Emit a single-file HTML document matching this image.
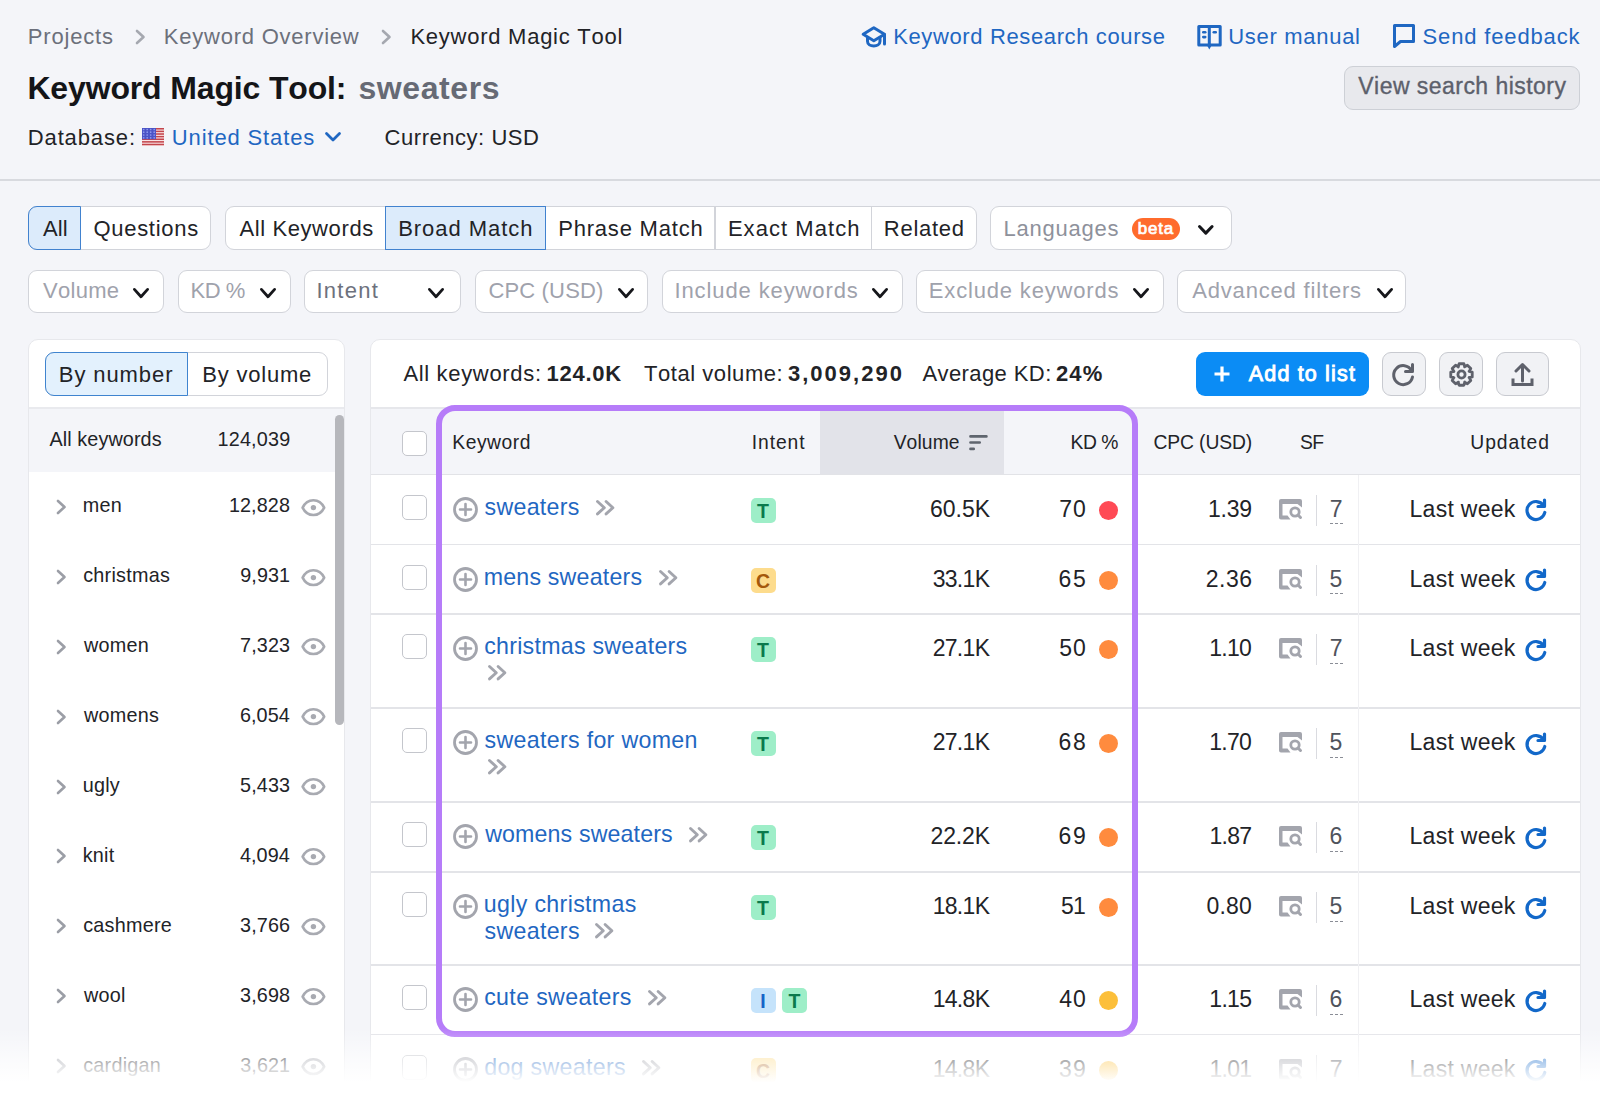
<!DOCTYPE html><html><head><meta charset="utf-8"><style>
html,body{margin:0;padding:0;}
body{width:1600px;height:1096px;overflow:hidden;position:relative;background:#f4f5f9;font-family:"Liberation Sans",sans-serif;font-kerning:none;}
.t{position:absolute;white-space:nowrap;}
.b{position:absolute;box-sizing:border-box;}
svg.b{overflow:visible;}
</style></head><body>
<div class="t" style="left:27.80px;top:26.10px;font-size:22px;line-height:22px;color:#6c707b;font-weight:400;letter-spacing:0.814px;">Projects</div>
<svg class="b" style="left:135px;top:29px;" width="11" height="16" viewBox="0 0 11 16"><polyline points="2,2 8.5,8 2,14" fill="none" stroke="#a5a8b0" stroke-width="2.6" stroke-linecap="round" stroke-linejoin="round"/></svg>
<div class="t" style="left:163.80px;top:26.10px;font-size:22px;line-height:22px;color:#6c707b;font-weight:400;letter-spacing:0.770px;">Keyword Overview</div>
<svg class="b" style="left:381px;top:29px;" width="11" height="16" viewBox="0 0 11 16"><polyline points="2,2 8.5,8 2,14" fill="none" stroke="#a5a8b0" stroke-width="2.6" stroke-linecap="round" stroke-linejoin="round"/></svg>
<div class="t" style="left:410.40px;top:26.10px;font-size:22px;line-height:22px;color:#222327;font-weight:400;letter-spacing:0.747px;">Keyword Magic Tool</div>
<div class="t" style="left:27.40px;top:72.00px;font-size:32px;line-height:32px;color:#141518;font-weight:700;letter-spacing:-0.150px;">Keyword Magic Tool:</div>
<div class="t" style="left:358.40px;top:72.00px;font-size:32px;line-height:32px;color:#666a75;font-weight:700;letter-spacing:0.586px;">sweaters</div>
<div class="t" style="left:27.80px;top:127.00px;font-size:22px;line-height:22px;color:#222327;font-weight:400;letter-spacing:0.863px;">Database:</div>
<svg class="b" style="left:142px;top:128px;" width="22" height="18" viewBox="0 0 22 18"><rect x="0" y="0" width="22" height="18" fill="#fbe9ea"/><rect x="0" y="0.00" width="22" height="1.55" fill="#c3464d"/><rect x="0" y="2.62" width="22" height="1.55" fill="#c3464d"/><rect x="0" y="5.24" width="22" height="1.55" fill="#c3464d"/><rect x="0" y="7.86" width="22" height="1.55" fill="#c3464d"/><rect x="0" y="10.48" width="22" height="1.55" fill="#c3464d"/><rect x="0" y="13.10" width="22" height="1.55" fill="#c3464d"/><rect x="0" y="15.72" width="22" height="1.55" fill="#c3464d"/><rect x="0" y="0" width="14" height="11.2" fill="#4b53c6"/><circle cx="1.7" cy="1.5" r="0.85" fill="#8f99ee"/><circle cx="5.2" cy="1.5" r="0.85" fill="#8f99ee"/><circle cx="8.7" cy="1.5" r="0.85" fill="#8f99ee"/><circle cx="12.2" cy="1.5" r="0.85" fill="#8f99ee"/><circle cx="1.7" cy="4.2" r="0.85" fill="#8f99ee"/><circle cx="5.2" cy="4.2" r="0.85" fill="#8f99ee"/><circle cx="8.7" cy="4.2" r="0.85" fill="#8f99ee"/><circle cx="12.2" cy="4.2" r="0.85" fill="#8f99ee"/><circle cx="1.7" cy="7.0" r="0.85" fill="#8f99ee"/><circle cx="5.2" cy="7.0" r="0.85" fill="#8f99ee"/><circle cx="8.7" cy="7.0" r="0.85" fill="#8f99ee"/><circle cx="12.2" cy="7.0" r="0.85" fill="#8f99ee"/><circle cx="1.7" cy="9.8" r="0.85" fill="#8f99ee"/><circle cx="5.2" cy="9.8" r="0.85" fill="#8f99ee"/><circle cx="8.7" cy="9.8" r="0.85" fill="#8f99ee"/><circle cx="12.2" cy="9.8" r="0.85" fill="#8f99ee"/></svg>
<div class="t" style="left:171.80px;top:127.00px;font-size:22px;line-height:22px;color:#1f67c2;font-weight:400;letter-spacing:0.867px;">United States</div>
<svg class="b" style="left:324px;top:131px;" width="18" height="12" viewBox="0 0 18 12"><polyline points="2.5,2.5 9,9 15.5,2.5" fill="none" stroke="#1f67c2" stroke-width="2.8" stroke-linecap="round" stroke-linejoin="round"/></svg>
<div class="t" style="left:384.60px;top:127.00px;font-size:22px;line-height:22px;color:#222327;font-weight:400;letter-spacing:0.533px;">Currency: USD</div>
<svg class="b" style="left:861px;top:24px;" width="26" height="26" viewBox="0 0 26 26"><g fill="none" stroke="#1f67c2" stroke-width="3" stroke-linejoin="round" stroke-linecap="round"><path d="M12.8,3.7 L23.5,10.3 L12.8,16.8 L2.2,10.3 Z"/><path d="M6.5,13.8 V17.3 C6.5,20.3 9.5,22 12.8,22 C16,22 19,20.3 19,17.3 V13.8"/><path d="M23.5,10.5 V20"/></g></svg>
<div class="t" style="left:893.20px;top:26.10px;font-size:22px;line-height:22px;color:#1f67c2;font-weight:400;letter-spacing:0.627px;">Keyword Research course</div>
<svg class="b" style="left:1197px;top:23.5px;" width="25" height="27" viewBox="0 0 25 27"><g fill="none" stroke="#1f67c2" stroke-width="3" stroke-linejoin="round"><path d="M1.8,2.6 H12.3 V20.9 H1.8 Z"/><path d="M12.3,2.6 H23.2 V20.9 H12.3"/></g><path d="M9.3,20 L12.3,25.6 L15.3,20 Z" fill="#1f67c2"/><rect x="5" y="7" width="4.5" height="2.6" rx="1.3" fill="#1f67c2"/><rect x="5" y="11.8" width="4.5" height="2.6" rx="1.3" fill="#1f67c2"/><rect x="15.5" y="7" width="4.5" height="2.6" rx="1.3" fill="#1f67c2"/></svg>
<div class="t" style="left:1228.20px;top:26.10px;font-size:22px;line-height:22px;color:#1f67c2;font-weight:400;letter-spacing:0.710px;">User manual</div>
<svg class="b" style="left:1393px;top:23.5px;" width="24" height="26" viewBox="0 0 24 26"><path d="M1.5,22.5 V1.5 H20.5 V17.5 H7.5 Z" fill="none" stroke="#1f67c2" stroke-width="3" stroke-linejoin="round"/></svg>
<div class="t" style="left:1422.60px;top:26.10px;font-size:22px;line-height:22px;color:#1f67c2;font-weight:400;letter-spacing:0.842px;">Send feedback</div>
<div class="b" style="left:1344px;top:66px;width:236.00px;height:43.50px;background:#e8e9ed;border:1.2px solid #cdd0d6;border-radius:9px;"></div>
<div class="t" style="left:1358.30px;top:75.15px;font-size:23px;line-height:23px;color:#5c606b;font-weight:400;letter-spacing:0.456px;-webkit-text-stroke:0.35px currentColor;">View search history</div>
<div class="b" style="left:0px;top:179px;width:1600.00px;height:2.00px;background:#d8dadf;"></div>
<div class="b" style="left:28px;top:206px;width:183.00px;height:44.00px;background:#fff;border:1.2px solid #d2d4da;border-radius:9px;"></div>
<div class="b" style="left:28px;top:206px;width:52.60px;height:44.00px;background:#dcebfb;border:1.5px solid #4182cf;border-radius:9px 0 0 9px;"></div>
<div class="t" style="left:43.00px;top:217.90px;font-size:22px;line-height:22px;color:#222327;font-weight:400;letter-spacing:0.125px;">All</div>
<div class="t" style="left:93.40px;top:217.90px;font-size:22px;line-height:22px;color:#222327;font-weight:400;letter-spacing:0.725px;">Questions</div>
<div class="b" style="left:225px;top:206px;width:752.00px;height:44.00px;background:#fff;border:1.2px solid #d2d4da;border-radius:9px;"></div>
<div class="t" style="left:239.40px;top:217.90px;font-size:22px;line-height:22px;color:#222327;font-weight:400;letter-spacing:0.609px;">All Keywords</div>
<div class="b" style="left:385px;top:206px;width:161.00px;height:44.00px;background:#dcebfb;border:1.5px solid #4182cf;border-radius:0 0 0 0;"></div>
<div class="t" style="left:398.20px;top:217.90px;font-size:22px;line-height:22px;color:#222327;font-weight:400;letter-spacing:0.950px;">Broad Match</div>
<div class="t" style="left:558.20px;top:217.90px;font-size:22px;line-height:22px;color:#222327;font-weight:400;letter-spacing:0.795px;">Phrase Match</div>
<div class="b" style="left:714.4px;top:207px;width:1.20px;height:42.00px;background:#d2d4da;"></div>
<div class="t" style="left:727.90px;top:217.90px;font-size:22px;line-height:22px;color:#222327;font-weight:400;letter-spacing:1.050px;">Exact Match</div>
<div class="b" style="left:870.8px;top:207px;width:1.20px;height:42.00px;background:#d2d4da;"></div>
<div class="t" style="left:883.80px;top:217.90px;font-size:22px;line-height:22px;color:#222327;font-weight:400;letter-spacing:0.733px;">Related</div>
<div class="b" style="left:990px;top:206px;width:241.50px;height:44.00px;background:#fff;border:1.2px solid #d2d4da;border-radius:9px;"></div>
<div class="t" style="left:1003.60px;top:217.90px;font-size:22px;line-height:22px;color:#8e919b;font-weight:400;letter-spacing:0.762px;">Languages</div>
<div class="b" style="left:1132px;top:217.8px;width:48.00px;height:21.90px;background:#ff6b2c;border-radius:11px;"></div>
<div class="t" style="left:1137.70px;top:219.75px;font-size:17px;line-height:17px;color:#fff;font-weight:400;letter-spacing:0.800px;-webkit-text-stroke:0.7px #fff;">beta</div>
<svg class="b" style="left:1197.7px;top:224.8px;" width="15.6" height="9.6" viewBox="0 0 15.6 9.6"><polyline points="1.5,1.5 7.8,8.1 14.1,1.5" fill="none" stroke="#16171b" stroke-width="3" stroke-linecap="round" stroke-linejoin="round"/></svg>
<div class="b" style="left:28px;top:270px;width:135.70px;height:43.00px;background:#fff;border:1.2px solid #d2d4da;border-radius:9px;"></div>
<div class="t" style="left:43.00px;top:280.30px;font-size:22px;line-height:22px;color:#9fa2ac;font-weight:400;letter-spacing:0.280px;">Volume</div>
<svg class="b" style="left:132.89999999999998px;top:287.90000000000003px;" width="16.0" height="10.2" viewBox="0 0 16.0 10.2"><polyline points="1.4,1.4 8.0,8.8 14.6,1.4" fill="none" stroke="#16171b" stroke-width="2.8" stroke-linecap="round" stroke-linejoin="round"/></svg>
<div class="b" style="left:177.5px;top:270px;width:113.30px;height:43.00px;background:#fff;border:1.2px solid #d2d4da;border-radius:9px;"></div>
<div class="t" style="left:190.40px;top:280.30px;font-size:22px;line-height:22px;color:#9fa2ac;font-weight:400;letter-spacing:-0.400px;">KD %</div>
<svg class="b" style="left:260.05px;top:287.90000000000003px;" width="16.0" height="10.2" viewBox="0 0 16.0 10.2"><polyline points="1.4,1.4 8.0,8.8 14.6,1.4" fill="none" stroke="#16171b" stroke-width="2.8" stroke-linecap="round" stroke-linejoin="round"/></svg>
<div class="b" style="left:304.4px;top:270px;width:157.00px;height:43.00px;background:#fff;border:1.2px solid #d2d4da;border-radius:9px;"></div>
<div class="t" style="left:316.40px;top:280.30px;font-size:22px;line-height:22px;color:#6d717d;font-weight:400;letter-spacing:1.300px;">Intent</div>
<svg class="b" style="left:427.7px;top:287.90000000000003px;" width="16.0" height="10.2" viewBox="0 0 16.0 10.2"><polyline points="1.4,1.4 8.0,8.8 14.6,1.4" fill="none" stroke="#16171b" stroke-width="2.8" stroke-linecap="round" stroke-linejoin="round"/></svg>
<div class="b" style="left:475.3px;top:270px;width:173.20px;height:43.00px;background:#fff;border:1.2px solid #d2d4da;border-radius:9px;"></div>
<div class="t" style="left:488.40px;top:280.30px;font-size:22px;line-height:22px;color:#9fa2ac;font-weight:400;letter-spacing:0.162px;">CPC (USD)</div>
<svg class="b" style="left:617.5000000000001px;top:287.90000000000003px;" width="16.0" height="10.2" viewBox="0 0 16.0 10.2"><polyline points="1.4,1.4 8.0,8.8 14.6,1.4" fill="none" stroke="#16171b" stroke-width="2.8" stroke-linecap="round" stroke-linejoin="round"/></svg>
<div class="b" style="left:662px;top:270px;width:240.60px;height:43.00px;background:#fff;border:1.2px solid #d2d4da;border-radius:9px;"></div>
<div class="t" style="left:674.50px;top:280.30px;font-size:22px;line-height:22px;color:#9fa2ac;font-weight:400;letter-spacing:0.887px;">Include keywords</div>
<svg class="b" style="left:872.1px;top:287.90000000000003px;" width="16.0" height="10.2" viewBox="0 0 16.0 10.2"><polyline points="1.4,1.4 8.0,8.8 14.6,1.4" fill="none" stroke="#16171b" stroke-width="2.8" stroke-linecap="round" stroke-linejoin="round"/></svg>
<div class="b" style="left:916px;top:270px;width:248.00px;height:43.00px;background:#fff;border:1.2px solid #d2d4da;border-radius:9px;"></div>
<div class="t" style="left:928.80px;top:280.30px;font-size:22px;line-height:22px;color:#9fa2ac;font-weight:400;letter-spacing:0.833px;">Exclude keywords</div>
<svg class="b" style="left:1133.3999999999999px;top:287.90000000000003px;" width="16.0" height="10.2" viewBox="0 0 16.0 10.2"><polyline points="1.4,1.4 8.0,8.8 14.6,1.4" fill="none" stroke="#16171b" stroke-width="2.8" stroke-linecap="round" stroke-linejoin="round"/></svg>
<div class="b" style="left:1177.4px;top:270px;width:229.10px;height:43.00px;background:#fff;border:1.2px solid #d2d4da;border-radius:9px;"></div>
<div class="t" style="left:1192.20px;top:280.30px;font-size:22px;line-height:22px;color:#9fa2ac;font-weight:400;letter-spacing:0.827px;">Advanced filters</div>
<svg class="b" style="left:1376.5px;top:287.90000000000003px;" width="16.0" height="10.2" viewBox="0 0 16.0 10.2"><polyline points="1.4,1.4 8.0,8.8 14.6,1.4" fill="none" stroke="#16171b" stroke-width="2.8" stroke-linecap="round" stroke-linejoin="round"/></svg>
<div class="b" style="left:28px;top:339px;width:317.00px;height:861.00px;background:#fff;border:1.2px solid #e7e8ec;border-radius:10px;"></div>
<div class="b" style="left:45px;top:352px;width:283.00px;height:44.00px;background:#fff;border:1.2px solid #d2d4da;border-radius:9px;"></div>
<div class="b" style="left:45px;top:352px;width:142.50px;height:44.00px;background:#e3f1fd;border:1.5px solid #3f84cf;border-radius:9px 0 0 9px;"></div>
<div class="t" style="left:58.80px;top:363.70px;font-size:22px;line-height:22px;color:#222327;font-weight:400;letter-spacing:0.912px;">By number</div>
<div class="t" style="left:202.30px;top:363.70px;font-size:22px;line-height:22px;color:#222327;font-weight:400;letter-spacing:0.787px;">By volume</div>
<div class="b" style="left:29px;top:407.3px;width:315.00px;height:2.00px;background:#e9eaee;"></div>
<div class="b" style="left:29px;top:409.3px;width:315.00px;height:62.70px;background:#f4f5f9;"></div>
<div class="t" style="left:49.40px;top:429.57px;font-size:19.8px;line-height:19.8px;color:#222327;font-weight:400;letter-spacing:0.109px;">All keywords</div>
<div class="t" style="left:217.50px;top:429.57px;font-size:19.8px;line-height:19.8px;color:#222327;font-weight:400;letter-spacing:0.200px;">124,039</div>
<svg class="b" style="left:55.5px;top:498.90000000000003px;" width="12" height="16" viewBox="0 0 12 16"><polyline points="2,2 8.5,8 2,14" fill="none" stroke="#9b9ea6" stroke-width="2.6" stroke-linecap="round" stroke-linejoin="round"/></svg>
<div class="t" style="left:82.70px;top:496.37px;font-size:19.8px;line-height:19.8px;color:#222327;font-weight:400;letter-spacing:0.250px;">men</div>
<div class="t" style="left:228.90px;top:496.37px;font-size:19.8px;line-height:19.8px;color:#222327;font-weight:400;letter-spacing:0.100px;">12,828</div>
<svg class="b" style="left:300.6px;top:498.6px;" width="26" height="18" viewBox="0 0 26 18"><path d="M1.6,8.6 C3.8,4 7.6,1.2 12.4,1.2 C17.2,1.2 21,4 23.2,8.6 C21,13.2 17.2,16 12.4,16 C7.6,16 3.8,13.2 1.6,8.6 Z" fill="none" stroke="#a8aab1" stroke-width="2.6" stroke-linejoin="round"/><circle cx="12.4" cy="8.6" r="2.7" fill="#a8aab1"/></svg>
<svg class="b" style="left:55.5px;top:568.8000000000001px;" width="12" height="16" viewBox="0 0 12 16"><polyline points="2,2 8.5,8 2,14" fill="none" stroke="#9b9ea6" stroke-width="2.6" stroke-linecap="round" stroke-linejoin="round"/></svg>
<div class="t" style="left:83.20px;top:566.27px;font-size:19.8px;line-height:19.8px;color:#222327;font-weight:400;letter-spacing:0.250px;">christmas</div>
<div class="t" style="left:240.20px;top:566.27px;font-size:19.8px;line-height:19.8px;color:#222327;font-weight:400;letter-spacing:0.100px;">9,931</div>
<svg class="b" style="left:300.6px;top:568.5px;" width="26" height="18" viewBox="0 0 26 18"><path d="M1.6,8.6 C3.8,4 7.6,1.2 12.4,1.2 C17.2,1.2 21,4 23.2,8.6 C21,13.2 17.2,16 12.4,16 C7.6,16 3.8,13.2 1.6,8.6 Z" fill="none" stroke="#a8aab1" stroke-width="2.6" stroke-linejoin="round"/><circle cx="12.4" cy="8.6" r="2.7" fill="#a8aab1"/></svg>
<svg class="b" style="left:55.5px;top:638.7px;" width="12" height="16" viewBox="0 0 12 16"><polyline points="2,2 8.5,8 2,14" fill="none" stroke="#9b9ea6" stroke-width="2.6" stroke-linecap="round" stroke-linejoin="round"/></svg>
<div class="t" style="left:84.00px;top:636.17px;font-size:19.8px;line-height:19.8px;color:#222327;font-weight:400;letter-spacing:0.250px;">women</div>
<div class="t" style="left:240.10px;top:636.17px;font-size:19.8px;line-height:19.8px;color:#222327;font-weight:400;letter-spacing:0.100px;">7,323</div>
<svg class="b" style="left:300.6px;top:638.4px;" width="26" height="18" viewBox="0 0 26 18"><path d="M1.6,8.6 C3.8,4 7.6,1.2 12.4,1.2 C17.2,1.2 21,4 23.2,8.6 C21,13.2 17.2,16 12.4,16 C7.6,16 3.8,13.2 1.6,8.6 Z" fill="none" stroke="#a8aab1" stroke-width="2.6" stroke-linejoin="round"/><circle cx="12.4" cy="8.6" r="2.7" fill="#a8aab1"/></svg>
<svg class="b" style="left:55.5px;top:708.6000000000001px;" width="12" height="16" viewBox="0 0 12 16"><polyline points="2,2 8.5,8 2,14" fill="none" stroke="#9b9ea6" stroke-width="2.6" stroke-linecap="round" stroke-linejoin="round"/></svg>
<div class="t" style="left:84.00px;top:706.07px;font-size:19.8px;line-height:19.8px;color:#222327;font-weight:400;letter-spacing:0.250px;">womens</div>
<div class="t" style="left:239.90px;top:706.07px;font-size:19.8px;line-height:19.8px;color:#222327;font-weight:400;letter-spacing:0.100px;">6,054</div>
<svg class="b" style="left:300.6px;top:708.3000000000001px;" width="26" height="18" viewBox="0 0 26 18"><path d="M1.6,8.6 C3.8,4 7.6,1.2 12.4,1.2 C17.2,1.2 21,4 23.2,8.6 C21,13.2 17.2,16 12.4,16 C7.6,16 3.8,13.2 1.6,8.6 Z" fill="none" stroke="#a8aab1" stroke-width="2.6" stroke-linejoin="round"/><circle cx="12.4" cy="8.6" r="2.7" fill="#a8aab1"/></svg>
<svg class="b" style="left:55.5px;top:778.5000000000001px;" width="12" height="16" viewBox="0 0 12 16"><polyline points="2,2 8.5,8 2,14" fill="none" stroke="#9b9ea6" stroke-width="2.6" stroke-linecap="round" stroke-linejoin="round"/></svg>
<div class="t" style="left:82.70px;top:775.97px;font-size:19.8px;line-height:19.8px;color:#222327;font-weight:400;letter-spacing:0.250px;">ugly</div>
<div class="t" style="left:240.10px;top:775.97px;font-size:19.8px;line-height:19.8px;color:#222327;font-weight:400;letter-spacing:0.100px;">5,433</div>
<svg class="b" style="left:300.6px;top:778.2px;" width="26" height="18" viewBox="0 0 26 18"><path d="M1.6,8.6 C3.8,4 7.6,1.2 12.4,1.2 C17.2,1.2 21,4 23.2,8.6 C21,13.2 17.2,16 12.4,16 C7.6,16 3.8,13.2 1.6,8.6 Z" fill="none" stroke="#a8aab1" stroke-width="2.6" stroke-linejoin="round"/><circle cx="12.4" cy="8.6" r="2.7" fill="#a8aab1"/></svg>
<svg class="b" style="left:55.5px;top:848.4000000000001px;" width="12" height="16" viewBox="0 0 12 16"><polyline points="2,2 8.5,8 2,14" fill="none" stroke="#9b9ea6" stroke-width="2.6" stroke-linecap="round" stroke-linejoin="round"/></svg>
<div class="t" style="left:82.70px;top:845.87px;font-size:19.8px;line-height:19.8px;color:#222327;font-weight:400;letter-spacing:0.250px;">knit</div>
<div class="t" style="left:239.90px;top:845.87px;font-size:19.8px;line-height:19.8px;color:#222327;font-weight:400;letter-spacing:0.100px;">4,094</div>
<svg class="b" style="left:300.6px;top:848.1px;" width="26" height="18" viewBox="0 0 26 18"><path d="M1.6,8.6 C3.8,4 7.6,1.2 12.4,1.2 C17.2,1.2 21,4 23.2,8.6 C21,13.2 17.2,16 12.4,16 C7.6,16 3.8,13.2 1.6,8.6 Z" fill="none" stroke="#a8aab1" stroke-width="2.6" stroke-linejoin="round"/><circle cx="12.4" cy="8.6" r="2.7" fill="#a8aab1"/></svg>
<svg class="b" style="left:55.5px;top:918.3000000000002px;" width="12" height="16" viewBox="0 0 12 16"><polyline points="2,2 8.5,8 2,14" fill="none" stroke="#9b9ea6" stroke-width="2.6" stroke-linecap="round" stroke-linejoin="round"/></svg>
<div class="t" style="left:83.20px;top:915.77px;font-size:19.8px;line-height:19.8px;color:#222327;font-weight:400;letter-spacing:0.250px;">cashmere</div>
<div class="t" style="left:240.10px;top:915.77px;font-size:19.8px;line-height:19.8px;color:#222327;font-weight:400;letter-spacing:0.100px;">3,766</div>
<svg class="b" style="left:300.6px;top:918.0000000000001px;" width="26" height="18" viewBox="0 0 26 18"><path d="M1.6,8.6 C3.8,4 7.6,1.2 12.4,1.2 C17.2,1.2 21,4 23.2,8.6 C21,13.2 17.2,16 12.4,16 C7.6,16 3.8,13.2 1.6,8.6 Z" fill="none" stroke="#a8aab1" stroke-width="2.6" stroke-linejoin="round"/><circle cx="12.4" cy="8.6" r="2.7" fill="#a8aab1"/></svg>
<svg class="b" style="left:55.5px;top:988.2000000000002px;" width="12" height="16" viewBox="0 0 12 16"><polyline points="2,2 8.5,8 2,14" fill="none" stroke="#9b9ea6" stroke-width="2.6" stroke-linecap="round" stroke-linejoin="round"/></svg>
<div class="t" style="left:84.00px;top:985.67px;font-size:19.8px;line-height:19.8px;color:#222327;font-weight:400;letter-spacing:0.250px;">wool</div>
<div class="t" style="left:240.10px;top:985.67px;font-size:19.8px;line-height:19.8px;color:#222327;font-weight:400;letter-spacing:0.100px;">3,698</div>
<svg class="b" style="left:300.6px;top:987.9000000000001px;" width="26" height="18" viewBox="0 0 26 18"><path d="M1.6,8.6 C3.8,4 7.6,1.2 12.4,1.2 C17.2,1.2 21,4 23.2,8.6 C21,13.2 17.2,16 12.4,16 C7.6,16 3.8,13.2 1.6,8.6 Z" fill="none" stroke="#a8aab1" stroke-width="2.6" stroke-linejoin="round"/><circle cx="12.4" cy="8.6" r="2.7" fill="#a8aab1"/></svg>
<svg class="b" style="left:55.5px;top:1058.1000000000001px;" width="12" height="16" viewBox="0 0 12 16"><polyline points="2,2 8.5,8 2,14" fill="none" stroke="#9b9ea6" stroke-width="2.6" stroke-linecap="round" stroke-linejoin="round"/></svg>
<div class="t" style="left:83.20px;top:1055.57px;font-size:19.8px;line-height:19.8px;color:#222327;font-weight:400;letter-spacing:0.250px;">cardigan</div>
<div class="t" style="left:240.20px;top:1055.57px;font-size:19.8px;line-height:19.8px;color:#222327;font-weight:400;letter-spacing:0.100px;">3,621</div>
<svg class="b" style="left:300.6px;top:1057.8000000000002px;" width="26" height="18" viewBox="0 0 26 18"><path d="M1.6,8.6 C3.8,4 7.6,1.2 12.4,1.2 C17.2,1.2 21,4 23.2,8.6 C21,13.2 17.2,16 12.4,16 C7.6,16 3.8,13.2 1.6,8.6 Z" fill="none" stroke="#a8aab1" stroke-width="2.6" stroke-linejoin="round"/><circle cx="12.4" cy="8.6" r="2.7" fill="#a8aab1"/></svg>
<div class="b" style="left:334.5px;top:415px;width:9.00px;height:310.00px;background:#b6b7bc;border-radius:5px;"></div>
<div class="b" style="left:370px;top:339px;width:1210.50px;height:861.00px;background:#fff;border:1.2px solid #e7e8ec;border-radius:10px;"></div>
<div class="t" style="left:403.40px;top:362.50px;font-size:22px;line-height:22px;color:#222327;font-weight:400;letter-spacing:0.667px;">All keywords:</div>
<div class="t" style="left:546.60px;top:362.50px;font-size:22px;line-height:22px;color:#222327;font-weight:700;letter-spacing:0.740px;">124.0K</div>
<div class="t" style="left:644.00px;top:362.50px;font-size:22px;line-height:22px;color:#222327;font-weight:400;letter-spacing:0.550px;">Total volume:</div>
<div class="t" style="left:788.00px;top:362.50px;font-size:22px;line-height:22px;color:#222327;font-weight:700;letter-spacing:2.012px;">3,009,290</div>
<div class="t" style="left:922.40px;top:362.50px;font-size:22px;line-height:22px;color:#222327;font-weight:400;letter-spacing:0.415px;">Average KD:</div>
<div class="t" style="left:1055.95px;top:362.50px;font-size:22px;line-height:22px;color:#222327;font-weight:700;letter-spacing:1.150px;">24%</div>
<div class="b" style="left:1196px;top:352px;width:173.00px;height:44.00px;background:#0b8cf5;border-radius:9px;"></div>
<svg class="b" style="left:1214.4px;top:366.2px;" width="16" height="16" viewBox="0 0 16 16"><path d="M8,0.5 V15.5 M0.5,8 H15.5" stroke="#fff" stroke-width="3.2" stroke-linecap="butt"/></svg>
<div class="t" style="left:1248.75px;top:363.93px;font-size:21.5px;line-height:21.5px;color:#fff;font-weight:400;letter-spacing:1.170px;-webkit-text-stroke:0.9px #fff;">Add to list</div>
<div class="b" style="left:1382px;top:352px;width:44.00px;height:44.00px;background:#f1f2f5;border:1.2px solid #c8cad0;border-radius:9px;"></div>
<div class="b" style="left:1439.3px;top:352px;width:43.70px;height:44.00px;background:#f1f2f5;border:1.2px solid #c8cad0;border-radius:9px;"></div>
<div class="b" style="left:1496.4px;top:352px;width:52.60px;height:44.00px;background:#f1f2f5;border:1.2px solid #c8cad0;border-radius:9px;"></div>
<svg class="b" style="left:1392px;top:362px;" width="24" height="24" viewBox="0 0 24 24"><path d="M19.5,8.5 A9.5,9.5 0 1 0 20.5,15" fill="none" stroke="#5e616b" stroke-width="3" stroke-linecap="round"/><path d="M20.5,2.5 V9.5 H13.5" fill="none" stroke="#5e616b" stroke-width="3" stroke-linejoin="round" stroke-linecap="round"/></svg>
<svg class="b" style="left:1448.5px;top:361.5px;" width="25" height="25" viewBox="0 0 25 25"><polygon points="10.10,1.77 14.90,1.77 15.69,4.95 15.58,4.90 18.39,3.21 21.79,6.61 20.10,9.42 20.05,9.31 23.23,10.10 23.23,14.90 20.05,15.69 20.10,15.58 21.79,18.39 18.39,21.79 15.58,20.10 15.69,20.05 14.90,23.23 10.10,23.23 9.31,20.05 9.42,20.10 6.61,21.79 3.21,18.39 4.90,15.58 4.95,15.69 1.77,14.90 1.77,10.10 4.95,9.31 4.90,9.42 3.21,6.61 6.61,3.21 9.42,4.90 9.31,4.95" fill="none" stroke="#5e616b" stroke-width="2.8" stroke-linejoin="round"/><circle cx="12.5" cy="12.5" r="3.6" fill="none" stroke="#5e616b" stroke-width="2.8"/></svg>
<svg class="b" style="left:1509px;top:361px;" width="27" height="26" viewBox="0 0 27 26"><path d="M13.5,20 V4 M7,10 L13.5,3.5 L20,10" fill="none" stroke="#5e616b" stroke-width="3" stroke-linecap="round" stroke-linejoin="round"/><path d="M4,17.5 V23.5 H23 V17.5" fill="none" stroke="#5e616b" stroke-width="3" stroke-linejoin="miter"/></svg>
<div class="b" style="left:371px;top:407.3px;width:1209.00px;height:1.50px;background:#e6e7eb;"></div>
<div class="b" style="left:371px;top:408.8px;width:1209.00px;height:65.70px;background:#f4f5f9;"></div>
<div class="b" style="left:820.3px;top:408.8px;width:183.70px;height:65.70px;background:#e2e3e9;"></div>
<div class="b" style="left:371px;top:473.7px;width:1209.00px;height:1.50px;background:#e2e3e7;"></div>
<div class="b" style="left:402.3px;top:431.2px;width:25.00px;height:25.00px;background:#fff;border:1.2px solid #c4c6cc;border-radius:5px;"></div>
<div class="t" style="left:452.25px;top:432.89px;font-size:19.3px;line-height:19.3px;color:#222327;font-weight:400;letter-spacing:0.550px;">Keyword</div>
<div class="t" style="left:751.75px;top:432.89px;font-size:19.3px;line-height:19.3px;color:#222327;font-weight:400;letter-spacing:0.920px;">Intent</div>
<div class="t" style="left:893.65px;top:432.89px;font-size:19.3px;line-height:19.3px;color:#222327;font-weight:400;letter-spacing:0.100px;">Volume</div>
<svg class="b" style="left:968px;top:434px;" width="21" height="17" viewBox="0 0 21 17"><path d="M2.5,2.4 H18.4 M2.5,8.5 H11.7 M2.5,14.9 H5.7" stroke="#5f656e" stroke-width="2.7" stroke-linecap="round"/></svg>
<div class="t" style="left:1070.55px;top:432.89px;font-size:19.3px;line-height:19.3px;color:#222327;font-weight:400;letter-spacing:-0.500px;">KD %</div>
<div class="t" style="left:1153.55px;top:432.89px;font-size:19.3px;line-height:19.3px;color:#222327;font-weight:400;letter-spacing:-0.125px;">CPC (USD)</div>
<div class="t" style="left:1299.95px;top:432.89px;font-size:19.3px;line-height:19.3px;color:#222327;font-weight:400;letter-spacing:-0.500px;">SF</div>
<div class="t" style="left:1470.25px;top:432.89px;font-size:19.3px;line-height:19.3px;color:#222327;font-weight:400;letter-spacing:0.967px;">Updated</div>
<div class="b" style="left:402.3px;top:494.8px;width:25.00px;height:25.00px;background:#fff;border:1.2px solid #c4c6cc;border-radius:5px;"></div>
<svg class="b" style="left:452.5px;top:496.5px;" width="25" height="25" viewBox="0 0 25 25"><circle cx="12.5" cy="12.5" r="11" fill="none" stroke="#a3a5ad" stroke-width="2.8"/><path d="M12.5,7 V18 M7,12.5 H18" stroke="#a3a5ad" stroke-width="2.6" stroke-linecap="round"/></svg>
<div class="t" style="left:484.60px;top:495.98px;font-size:23.2px;line-height:23.2px;color:#1f67c2;font-weight:400;letter-spacing:0.271px;">sweaters</div>
<svg class="b" style="left:595.75px;top:499.7px;" width="19" height="16" viewBox="0 0 19 16"><g fill="none" stroke="#a3a5ad" stroke-width="2.9" stroke-linecap="round" stroke-linejoin="round"><polyline points="1.5,1.5 8.3,7.7 1.5,13.9"/><polyline points="10.1,1.5 16.9,7.7 10.1,13.9"/></g></svg>
<div class="b" style="left:750.5px;top:497.5px;width:25.00px;height:25.00px;background:#9eeec8;border-radius:5px;"></div>
<div class="t" style="left:750.5px;top:497.5px;width:25px;height:25px;line-height:26px;text-align:center;font-size:19.5px;font-weight:700;color:#0b7a4c;">T</div>
<div class="t" style="left:930.10px;top:497.55px;font-size:23px;line-height:23px;color:#222327;font-weight:400;letter-spacing:-0.050px;">60.5K</div>
<div class="t" style="left:1059.30px;top:497.55px;font-size:23px;line-height:23px;color:#222327;font-weight:400;letter-spacing:0.800px;">70</div>
<div class="b" style="left:1098.8px;top:500.6px;width:19.20px;height:19.20px;background:#ff4a55;border-radius:50%;"></div>
<div class="t" style="left:1208.00px;top:497.55px;font-size:23px;line-height:23px;color:#222327;font-weight:400;letter-spacing:-0.233px;">1.39</div>
<svg class="b" style="left:1278px;top:498.8px;" width="25" height="22" viewBox="0 0 25 22"><path d="M1,2 Q1,0 3,0 H22 Q24,0 24,2 V8.5 L19.5,5 H4.5 V16.5 H9.5 L12.5,20.5 H3 Q1,20.5 1,18.5 Z" fill="#a3a5ad"/><circle cx="17" cy="13" r="4.2" fill="none" stroke="#a3a5ad" stroke-width="2.8"/><path d="M20,16 L22.5,18.5" stroke="#a3a5ad" stroke-width="3" stroke-linecap="round"/></svg>
<div class="b" style="left:1316px;top:494.5px;width:1.40px;height:31.00px;background:#dadbe0;"></div>
<div class="t" style="left:1329.70px;top:497.55px;font-size:23px;line-height:23px;color:#4f535c;font-weight:400;letter-spacing:0.000px;">7</div>
<div class="b" style="left:1330px;top:523.0px;width:13px;height:0;border-top:1.5px dashed #8a8d96;"></div>
<div class="t" style="left:1409.50px;top:497.55px;font-size:23px;line-height:23px;color:#222327;font-weight:400;letter-spacing:0.288px;">Last week</div>
<svg class="b" style="left:1525px;top:498.1px;" width="25" height="24" viewBox="0 0 25 24"><path d="M18.5,7.5 A9,9 0 1 0 19.8,14.5" fill="none" stroke="#1268c9" stroke-width="3.2" stroke-linecap="round"/><path d="M19.5,2 V8.5 H13" fill="none" stroke="#1268c9" stroke-width="3.2" stroke-linejoin="round" stroke-linecap="round"/></svg>
<div class="b" style="left:371px;top:543.75px;width:1209.00px;height:1.50px;background:#e3e4e8;"></div>
<div class="b" style="left:402.3px;top:564.8px;width:25.00px;height:25.00px;background:#fff;border:1.2px solid #c4c6cc;border-radius:5px;"></div>
<svg class="b" style="left:452.5px;top:566.5px;" width="25" height="25" viewBox="0 0 25 25"><circle cx="12.5" cy="12.5" r="11" fill="none" stroke="#a3a5ad" stroke-width="2.8"/><path d="M12.5,7 V18 M7,12.5 H18" stroke="#a3a5ad" stroke-width="2.6" stroke-linecap="round"/></svg>
<div class="t" style="left:483.70px;top:565.98px;font-size:23.2px;line-height:23.2px;color:#1f67c2;font-weight:400;letter-spacing:0.200px;">mens sweaters</div>
<svg class="b" style="left:658.7px;top:569.7px;" width="19" height="16" viewBox="0 0 19 16"><g fill="none" stroke="#a3a5ad" stroke-width="2.9" stroke-linecap="round" stroke-linejoin="round"><polyline points="1.5,1.5 8.3,7.7 1.5,13.9"/><polyline points="10.1,1.5 16.9,7.7 10.1,13.9"/></g></svg>
<div class="b" style="left:750.5px;top:567.5px;width:25.00px;height:25.00px;background:#fddc8d;border-radius:5px;"></div>
<div class="t" style="left:750.5px;top:567.5px;width:25px;height:25px;line-height:26px;text-align:center;font-size:19.5px;font-weight:700;color:#a4580b;">C</div>
<div class="t" style="left:932.70px;top:567.55px;font-size:23px;line-height:23px;color:#222327;font-weight:400;letter-spacing:-0.700px;">33.1K</div>
<div class="t" style="left:1058.60px;top:567.55px;font-size:23px;line-height:23px;color:#222327;font-weight:400;letter-spacing:1.600px;">65</div>
<div class="b" style="left:1098.8px;top:570.6px;width:19.20px;height:19.20px;background:#ff8b3e;border-radius:50%;"></div>
<div class="t" style="left:1205.80px;top:567.55px;font-size:23px;line-height:23px;color:#222327;font-weight:400;letter-spacing:0.467px;">2.36</div>
<svg class="b" style="left:1278px;top:568.8px;" width="25" height="22" viewBox="0 0 25 22"><path d="M1,2 Q1,0 3,0 H22 Q24,0 24,2 V8.5 L19.5,5 H4.5 V16.5 H9.5 L12.5,20.5 H3 Q1,20.5 1,18.5 Z" fill="#a3a5ad"/><circle cx="17" cy="13" r="4.2" fill="none" stroke="#a3a5ad" stroke-width="2.8"/><path d="M20,16 L22.5,18.5" stroke="#a3a5ad" stroke-width="3" stroke-linecap="round"/></svg>
<div class="b" style="left:1316px;top:564.5px;width:1.40px;height:31.00px;background:#dadbe0;"></div>
<div class="t" style="left:1329.50px;top:567.55px;font-size:23px;line-height:23px;color:#4f535c;font-weight:400;letter-spacing:0.000px;">5</div>
<div class="b" style="left:1330px;top:593.0px;width:13px;height:0;border-top:1.5px dashed #8a8d96;"></div>
<div class="t" style="left:1409.50px;top:567.55px;font-size:23px;line-height:23px;color:#222327;font-weight:400;letter-spacing:0.288px;">Last week</div>
<svg class="b" style="left:1525px;top:568.1px;" width="25" height="24" viewBox="0 0 25 24"><path d="M18.5,7.5 A9,9 0 1 0 19.8,14.5" fill="none" stroke="#1268c9" stroke-width="3.2" stroke-linecap="round"/><path d="M19.5,2 V8.5 H13" fill="none" stroke="#1268c9" stroke-width="3.2" stroke-linejoin="round" stroke-linecap="round"/></svg>
<div class="b" style="left:371px;top:613.25px;width:1209.00px;height:1.50px;background:#e3e4e8;"></div>
<div class="b" style="left:402.3px;top:634.3px;width:25.00px;height:25.00px;background:#fff;border:1.2px solid #c4c6cc;border-radius:5px;"></div>
<svg class="b" style="left:452.5px;top:636.0px;" width="25" height="25" viewBox="0 0 25 25"><circle cx="12.5" cy="12.5" r="11" fill="none" stroke="#a3a5ad" stroke-width="2.8"/><path d="M12.5,7 V18 M7,12.5 H18" stroke="#a3a5ad" stroke-width="2.6" stroke-linecap="round"/></svg>
<div class="t" style="left:484.20px;top:635.48px;font-size:23.2px;line-height:23.2px;color:#1f67c2;font-weight:400;letter-spacing:0.265px;">christmas sweaters</div>
<svg class="b" style="left:487.8px;top:665.2px;" width="19" height="16" viewBox="0 0 19 16"><g fill="none" stroke="#a3a5ad" stroke-width="2.9" stroke-linecap="round" stroke-linejoin="round"><polyline points="1.5,1.5 8.3,7.7 1.5,13.9"/><polyline points="10.1,1.5 16.9,7.7 10.1,13.9"/></g></svg>
<div class="b" style="left:750.5px;top:637.0px;width:25.00px;height:25.00px;background:#9eeec8;border-radius:5px;"></div>
<div class="t" style="left:750.5px;top:637.0px;width:25px;height:25px;line-height:26px;text-align:center;font-size:19.5px;font-weight:700;color:#0b7a4c;">T</div>
<div class="t" style="left:932.70px;top:637.05px;font-size:23px;line-height:23px;color:#222327;font-weight:400;letter-spacing:-0.700px;">27.1K</div>
<div class="t" style="left:1059.30px;top:637.05px;font-size:23px;line-height:23px;color:#222327;font-weight:400;letter-spacing:0.800px;">50</div>
<div class="b" style="left:1098.8px;top:640.1px;width:19.20px;height:19.20px;background:#ff8b3e;border-radius:50%;"></div>
<div class="t" style="left:1209.20px;top:637.05px;font-size:23px;line-height:23px;color:#222327;font-weight:400;letter-spacing:-0.700px;">1.10</div>
<svg class="b" style="left:1278px;top:638.3px;" width="25" height="22" viewBox="0 0 25 22"><path d="M1,2 Q1,0 3,0 H22 Q24,0 24,2 V8.5 L19.5,5 H4.5 V16.5 H9.5 L12.5,20.5 H3 Q1,20.5 1,18.5 Z" fill="#a3a5ad"/><circle cx="17" cy="13" r="4.2" fill="none" stroke="#a3a5ad" stroke-width="2.8"/><path d="M20,16 L22.5,18.5" stroke="#a3a5ad" stroke-width="3" stroke-linecap="round"/></svg>
<div class="b" style="left:1316px;top:634.0px;width:1.40px;height:31.00px;background:#dadbe0;"></div>
<div class="t" style="left:1329.70px;top:637.05px;font-size:23px;line-height:23px;color:#4f535c;font-weight:400;letter-spacing:0.000px;">7</div>
<div class="b" style="left:1330px;top:662.5px;width:13px;height:0;border-top:1.5px dashed #8a8d96;"></div>
<div class="t" style="left:1409.50px;top:637.05px;font-size:23px;line-height:23px;color:#222327;font-weight:400;letter-spacing:0.288px;">Last week</div>
<svg class="b" style="left:1525px;top:637.6px;" width="25" height="24" viewBox="0 0 25 24"><path d="M18.5,7.5 A9,9 0 1 0 19.8,14.5" fill="none" stroke="#1268c9" stroke-width="3.2" stroke-linecap="round"/><path d="M19.5,2 V8.5 H13" fill="none" stroke="#1268c9" stroke-width="3.2" stroke-linejoin="round" stroke-linecap="round"/></svg>
<div class="b" style="left:371px;top:707.25px;width:1209.00px;height:1.50px;background:#e3e4e8;"></div>
<div class="b" style="left:402.3px;top:728.3px;width:25.00px;height:25.00px;background:#fff;border:1.2px solid #c4c6cc;border-radius:5px;"></div>
<svg class="b" style="left:452.5px;top:730.0px;" width="25" height="25" viewBox="0 0 25 25"><circle cx="12.5" cy="12.5" r="11" fill="none" stroke="#a3a5ad" stroke-width="2.8"/><path d="M12.5,7 V18 M7,12.5 H18" stroke="#a3a5ad" stroke-width="2.6" stroke-linecap="round"/></svg>
<div class="t" style="left:484.60px;top:729.48px;font-size:23.2px;line-height:23.2px;color:#1f67c2;font-weight:400;letter-spacing:0.312px;">sweaters for women</div>
<svg class="b" style="left:487.8px;top:759.2px;" width="19" height="16" viewBox="0 0 19 16"><g fill="none" stroke="#a3a5ad" stroke-width="2.9" stroke-linecap="round" stroke-linejoin="round"><polyline points="1.5,1.5 8.3,7.7 1.5,13.9"/><polyline points="10.1,1.5 16.9,7.7 10.1,13.9"/></g></svg>
<div class="b" style="left:750.5px;top:731.0px;width:25.00px;height:25.00px;background:#9eeec8;border-radius:5px;"></div>
<div class="t" style="left:750.5px;top:731.0px;width:25px;height:25px;line-height:26px;text-align:center;font-size:19.5px;font-weight:700;color:#0b7a4c;">T</div>
<div class="t" style="left:932.70px;top:731.05px;font-size:23px;line-height:23px;color:#222327;font-weight:400;letter-spacing:-0.700px;">27.1K</div>
<div class="t" style="left:1058.60px;top:731.05px;font-size:23px;line-height:23px;color:#222327;font-weight:400;letter-spacing:1.600px;">68</div>
<div class="b" style="left:1098.8px;top:734.1px;width:19.20px;height:19.20px;background:#ff8b3e;border-radius:50%;"></div>
<div class="t" style="left:1209.20px;top:731.05px;font-size:23px;line-height:23px;color:#222327;font-weight:400;letter-spacing:-0.700px;">1.70</div>
<svg class="b" style="left:1278px;top:732.3px;" width="25" height="22" viewBox="0 0 25 22"><path d="M1,2 Q1,0 3,0 H22 Q24,0 24,2 V8.5 L19.5,5 H4.5 V16.5 H9.5 L12.5,20.5 H3 Q1,20.5 1,18.5 Z" fill="#a3a5ad"/><circle cx="17" cy="13" r="4.2" fill="none" stroke="#a3a5ad" stroke-width="2.8"/><path d="M20,16 L22.5,18.5" stroke="#a3a5ad" stroke-width="3" stroke-linecap="round"/></svg>
<div class="b" style="left:1316px;top:728.0px;width:1.40px;height:31.00px;background:#dadbe0;"></div>
<div class="t" style="left:1329.50px;top:731.05px;font-size:23px;line-height:23px;color:#4f535c;font-weight:400;letter-spacing:0.000px;">5</div>
<div class="b" style="left:1330px;top:756.5px;width:13px;height:0;border-top:1.5px dashed #8a8d96;"></div>
<div class="t" style="left:1409.50px;top:731.05px;font-size:23px;line-height:23px;color:#222327;font-weight:400;letter-spacing:0.288px;">Last week</div>
<svg class="b" style="left:1525px;top:731.6px;" width="25" height="24" viewBox="0 0 25 24"><path d="M18.5,7.5 A9,9 0 1 0 19.8,14.5" fill="none" stroke="#1268c9" stroke-width="3.2" stroke-linecap="round"/><path d="M19.5,2 V8.5 H13" fill="none" stroke="#1268c9" stroke-width="3.2" stroke-linejoin="round" stroke-linecap="round"/></svg>
<div class="b" style="left:371px;top:801.25px;width:1209.00px;height:1.50px;background:#e3e4e8;"></div>
<div class="b" style="left:402.3px;top:822.3px;width:25.00px;height:25.00px;background:#fff;border:1.2px solid #c4c6cc;border-radius:5px;"></div>
<svg class="b" style="left:452.5px;top:824.0px;" width="25" height="25" viewBox="0 0 25 25"><circle cx="12.5" cy="12.5" r="11" fill="none" stroke="#a3a5ad" stroke-width="2.8"/><path d="M12.5,7 V18 M7,12.5 H18" stroke="#a3a5ad" stroke-width="2.6" stroke-linecap="round"/></svg>
<div class="t" style="left:485.20px;top:823.48px;font-size:23.2px;line-height:23.2px;color:#1f67c2;font-weight:400;letter-spacing:0.136px;">womens sweaters</div>
<svg class="b" style="left:689.4px;top:827.2px;" width="19" height="16" viewBox="0 0 19 16"><g fill="none" stroke="#a3a5ad" stroke-width="2.9" stroke-linecap="round" stroke-linejoin="round"><polyline points="1.5,1.5 8.3,7.7 1.5,13.9"/><polyline points="10.1,1.5 16.9,7.7 10.1,13.9"/></g></svg>
<div class="b" style="left:750.5px;top:825.0px;width:25.00px;height:25.00px;background:#9eeec8;border-radius:5px;"></div>
<div class="t" style="left:750.5px;top:825.0px;width:25px;height:25px;line-height:26px;text-align:center;font-size:19.5px;font-weight:700;color:#0b7a4c;">T</div>
<div class="t" style="left:930.60px;top:825.05px;font-size:23px;line-height:23px;color:#222327;font-weight:400;letter-spacing:-0.175px;">22.2K</div>
<div class="t" style="left:1058.60px;top:825.05px;font-size:23px;line-height:23px;color:#222327;font-weight:400;letter-spacing:1.700px;">69</div>
<div class="b" style="left:1098.8px;top:828.1px;width:19.20px;height:19.20px;background:#ff8b3e;border-radius:50%;"></div>
<div class="t" style="left:1209.50px;top:825.05px;font-size:23px;line-height:23px;color:#222327;font-weight:400;letter-spacing:-0.700px;">1.87</div>
<svg class="b" style="left:1278px;top:826.3px;" width="25" height="22" viewBox="0 0 25 22"><path d="M1,2 Q1,0 3,0 H22 Q24,0 24,2 V8.5 L19.5,5 H4.5 V16.5 H9.5 L12.5,20.5 H3 Q1,20.5 1,18.5 Z" fill="#a3a5ad"/><circle cx="17" cy="13" r="4.2" fill="none" stroke="#a3a5ad" stroke-width="2.8"/><path d="M20,16 L22.5,18.5" stroke="#a3a5ad" stroke-width="3" stroke-linecap="round"/></svg>
<div class="b" style="left:1316px;top:822.0px;width:1.40px;height:31.00px;background:#dadbe0;"></div>
<div class="t" style="left:1329.50px;top:825.05px;font-size:23px;line-height:23px;color:#4f535c;font-weight:400;letter-spacing:0.000px;">6</div>
<div class="b" style="left:1330px;top:850.5px;width:13px;height:0;border-top:1.5px dashed #8a8d96;"></div>
<div class="t" style="left:1409.50px;top:825.05px;font-size:23px;line-height:23px;color:#222327;font-weight:400;letter-spacing:0.288px;">Last week</div>
<svg class="b" style="left:1525px;top:825.6px;" width="25" height="24" viewBox="0 0 25 24"><path d="M18.5,7.5 A9,9 0 1 0 19.8,14.5" fill="none" stroke="#1268c9" stroke-width="3.2" stroke-linecap="round"/><path d="M19.5,2 V8.5 H13" fill="none" stroke="#1268c9" stroke-width="3.2" stroke-linejoin="round" stroke-linecap="round"/></svg>
<div class="b" style="left:371px;top:871.25px;width:1209.00px;height:1.50px;background:#e3e4e8;"></div>
<div class="b" style="left:402.3px;top:892.3px;width:25.00px;height:25.00px;background:#fff;border:1.2px solid #c4c6cc;border-radius:5px;"></div>
<svg class="b" style="left:452.5px;top:894.0px;" width="25" height="25" viewBox="0 0 25 25"><circle cx="12.5" cy="12.5" r="11" fill="none" stroke="#a3a5ad" stroke-width="2.8"/><path d="M12.5,7 V18 M7,12.5 H18" stroke="#a3a5ad" stroke-width="2.6" stroke-linecap="round"/></svg>
<div class="t" style="left:483.70px;top:893.48px;font-size:23.2px;line-height:23.2px;color:#1f67c2;font-weight:400;letter-spacing:0.346px;">ugly christmas</div>
<div class="t" style="left:484.60px;top:920.48px;font-size:23.2px;line-height:23.2px;color:#1f67c2;font-weight:400;letter-spacing:0.300px;">sweaters</div>
<svg class="b" style="left:595.3px;top:923.2px;" width="19" height="16" viewBox="0 0 19 16"><g fill="none" stroke="#a3a5ad" stroke-width="2.9" stroke-linecap="round" stroke-linejoin="round"><polyline points="1.5,1.5 8.3,7.7 1.5,13.9"/><polyline points="10.1,1.5 16.9,7.7 10.1,13.9"/></g></svg>
<div class="b" style="left:750.5px;top:895.0px;width:25.00px;height:25.00px;background:#9eeec8;border-radius:5px;"></div>
<div class="t" style="left:750.5px;top:895.0px;width:25px;height:25px;line-height:26px;text-align:center;font-size:19.5px;font-weight:700;color:#0b7a4c;">T</div>
<div class="t" style="left:932.70px;top:895.05px;font-size:23px;line-height:23px;color:#222327;font-weight:400;letter-spacing:-0.700px;">18.1K</div>
<div class="t" style="left:1061.00px;top:895.05px;font-size:23px;line-height:23px;color:#222327;font-weight:400;letter-spacing:-0.700px;">51</div>
<div class="b" style="left:1098.8px;top:898.1px;width:19.20px;height:19.20px;background:#ff8b3e;border-radius:50%;"></div>
<div class="t" style="left:1206.40px;top:895.05px;font-size:23px;line-height:23px;color:#222327;font-weight:400;letter-spacing:0.233px;">0.80</div>
<svg class="b" style="left:1278px;top:896.3px;" width="25" height="22" viewBox="0 0 25 22"><path d="M1,2 Q1,0 3,0 H22 Q24,0 24,2 V8.5 L19.5,5 H4.5 V16.5 H9.5 L12.5,20.5 H3 Q1,20.5 1,18.5 Z" fill="#a3a5ad"/><circle cx="17" cy="13" r="4.2" fill="none" stroke="#a3a5ad" stroke-width="2.8"/><path d="M20,16 L22.5,18.5" stroke="#a3a5ad" stroke-width="3" stroke-linecap="round"/></svg>
<div class="b" style="left:1316px;top:892.0px;width:1.40px;height:31.00px;background:#dadbe0;"></div>
<div class="t" style="left:1329.50px;top:895.05px;font-size:23px;line-height:23px;color:#4f535c;font-weight:400;letter-spacing:0.000px;">5</div>
<div class="b" style="left:1330px;top:920.5px;width:13px;height:0;border-top:1.5px dashed #8a8d96;"></div>
<div class="t" style="left:1409.50px;top:895.05px;font-size:23px;line-height:23px;color:#222327;font-weight:400;letter-spacing:0.288px;">Last week</div>
<svg class="b" style="left:1525px;top:895.6px;" width="25" height="24" viewBox="0 0 25 24"><path d="M18.5,7.5 A9,9 0 1 0 19.8,14.5" fill="none" stroke="#1268c9" stroke-width="3.2" stroke-linecap="round"/><path d="M19.5,2 V8.5 H13" fill="none" stroke="#1268c9" stroke-width="3.2" stroke-linejoin="round" stroke-linecap="round"/></svg>
<div class="b" style="left:371px;top:964.25px;width:1209.00px;height:1.50px;background:#e3e4e8;"></div>
<div class="b" style="left:402.3px;top:985.3px;width:25.00px;height:25.00px;background:#fff;border:1.2px solid #c4c6cc;border-radius:5px;"></div>
<svg class="b" style="left:452.5px;top:987.0px;" width="25" height="25" viewBox="0 0 25 25"><circle cx="12.5" cy="12.5" r="11" fill="none" stroke="#a3a5ad" stroke-width="2.8"/><path d="M12.5,7 V18 M7,12.5 H18" stroke="#a3a5ad" stroke-width="2.6" stroke-linecap="round"/></svg>
<div class="t" style="left:484.20px;top:986.48px;font-size:23.2px;line-height:23.2px;color:#1f67c2;font-weight:400;letter-spacing:0.342px;">cute sweaters</div>
<svg class="b" style="left:648.3px;top:990.2px;" width="19" height="16" viewBox="0 0 19 16"><g fill="none" stroke="#a3a5ad" stroke-width="2.9" stroke-linecap="round" stroke-linejoin="round"><polyline points="1.5,1.5 8.3,7.7 1.5,13.9"/><polyline points="10.1,1.5 16.9,7.7 10.1,13.9"/></g></svg>
<div class="b" style="left:750.5px;top:988.0px;width:25.00px;height:25.00px;background:#c5e3fb;border-radius:5px;"></div>
<div class="t" style="left:750.5px;top:988.0px;width:25px;height:25px;line-height:26px;text-align:center;font-size:19.5px;font-weight:700;color:#1664c8;">I</div>
<div class="b" style="left:782.0px;top:988.0px;width:25.00px;height:25.00px;background:#9eeec8;border-radius:5px;"></div>
<div class="t" style="left:782.0px;top:988.0px;width:25px;height:25px;line-height:26px;text-align:center;font-size:19.5px;font-weight:700;color:#0b7a4c;">T</div>
<div class="t" style="left:932.70px;top:988.05px;font-size:23px;line-height:23px;color:#222327;font-weight:400;letter-spacing:-0.700px;">14.8K</div>
<div class="t" style="left:1059.30px;top:988.05px;font-size:23px;line-height:23px;color:#222327;font-weight:400;letter-spacing:0.800px;">40</div>
<div class="b" style="left:1098.8px;top:991.1px;width:19.20px;height:19.20px;background:#fcbf3a;border-radius:50%;"></div>
<div class="t" style="left:1209.30px;top:988.05px;font-size:23px;line-height:23px;color:#222327;font-weight:400;letter-spacing:-0.700px;">1.15</div>
<svg class="b" style="left:1278px;top:989.3px;" width="25" height="22" viewBox="0 0 25 22"><path d="M1,2 Q1,0 3,0 H22 Q24,0 24,2 V8.5 L19.5,5 H4.5 V16.5 H9.5 L12.5,20.5 H3 Q1,20.5 1,18.5 Z" fill="#a3a5ad"/><circle cx="17" cy="13" r="4.2" fill="none" stroke="#a3a5ad" stroke-width="2.8"/><path d="M20,16 L22.5,18.5" stroke="#a3a5ad" stroke-width="3" stroke-linecap="round"/></svg>
<div class="b" style="left:1316px;top:985.0px;width:1.40px;height:31.00px;background:#dadbe0;"></div>
<div class="t" style="left:1329.50px;top:988.05px;font-size:23px;line-height:23px;color:#4f535c;font-weight:400;letter-spacing:0.000px;">6</div>
<div class="b" style="left:1330px;top:1013.5px;width:13px;height:0;border-top:1.5px dashed #8a8d96;"></div>
<div class="t" style="left:1409.50px;top:988.05px;font-size:23px;line-height:23px;color:#222327;font-weight:400;letter-spacing:0.288px;">Last week</div>
<svg class="b" style="left:1525px;top:988.6px;" width="25" height="24" viewBox="0 0 25 24"><path d="M18.5,7.5 A9,9 0 1 0 19.8,14.5" fill="none" stroke="#1268c9" stroke-width="3.2" stroke-linecap="round"/><path d="M19.5,2 V8.5 H13" fill="none" stroke="#1268c9" stroke-width="3.2" stroke-linejoin="round" stroke-linecap="round"/></svg>
<div class="b" style="left:371px;top:1033.75px;width:1209.00px;height:1.50px;background:#e3e4e8;"></div>
<div class="b" style="left:402.3px;top:1054.8px;width:25.00px;height:25.00px;background:#fff;border:1.2px solid #c4c6cc;border-radius:5px;"></div>
<svg class="b" style="left:452.5px;top:1056.5px;" width="25" height="25" viewBox="0 0 25 25"><circle cx="12.5" cy="12.5" r="11" fill="none" stroke="#a3a5ad" stroke-width="2.8"/><path d="M12.5,7 V18 M7,12.5 H18" stroke="#a3a5ad" stroke-width="2.6" stroke-linecap="round"/></svg>
<div class="t" style="left:484.20px;top:1055.98px;font-size:23.2px;line-height:23.2px;color:#1f67c2;font-weight:400;letter-spacing:0.318px;">dog sweaters</div>
<svg class="b" style="left:641.5px;top:1059.7px;" width="19" height="16" viewBox="0 0 19 16"><g fill="none" stroke="#a3a5ad" stroke-width="2.9" stroke-linecap="round" stroke-linejoin="round"><polyline points="1.5,1.5 8.3,7.7 1.5,13.9"/><polyline points="10.1,1.5 16.9,7.7 10.1,13.9"/></g></svg>
<div class="b" style="left:750.5px;top:1057.5px;width:25.00px;height:25.00px;background:#fddc8d;border-radius:5px;"></div>
<div class="t" style="left:750.5px;top:1057.5px;width:25px;height:25px;line-height:26px;text-align:center;font-size:19.5px;font-weight:700;color:#a4580b;">C</div>
<div class="t" style="left:932.70px;top:1057.55px;font-size:23px;line-height:23px;color:#222327;font-weight:400;letter-spacing:-0.700px;">14.8K</div>
<div class="t" style="left:1058.90px;top:1057.55px;font-size:23px;line-height:23px;color:#222327;font-weight:400;letter-spacing:1.400px;">39</div>
<div class="b" style="left:1098.8px;top:1060.6px;width:19.20px;height:19.20px;background:#fcbf3a;border-radius:50%;"></div>
<div class="t" style="left:1209.40px;top:1057.55px;font-size:23px;line-height:23px;color:#222327;font-weight:400;letter-spacing:-0.700px;">1.01</div>
<svg class="b" style="left:1278px;top:1058.8px;" width="25" height="22" viewBox="0 0 25 22"><path d="M1,2 Q1,0 3,0 H22 Q24,0 24,2 V8.5 L19.5,5 H4.5 V16.5 H9.5 L12.5,20.5 H3 Q1,20.5 1,18.5 Z" fill="#a3a5ad"/><circle cx="17" cy="13" r="4.2" fill="none" stroke="#a3a5ad" stroke-width="2.8"/><path d="M20,16 L22.5,18.5" stroke="#a3a5ad" stroke-width="3" stroke-linecap="round"/></svg>
<div class="b" style="left:1316px;top:1054.5px;width:1.40px;height:31.00px;background:#dadbe0;"></div>
<div class="t" style="left:1329.70px;top:1057.55px;font-size:23px;line-height:23px;color:#4f535c;font-weight:400;letter-spacing:0.000px;">7</div>
<div class="b" style="left:1330px;top:1083.0px;width:13px;height:0;border-top:1.5px dashed #8a8d96;"></div>
<div class="t" style="left:1409.50px;top:1057.55px;font-size:23px;line-height:23px;color:#222327;font-weight:400;letter-spacing:0.288px;">Last week</div>
<svg class="b" style="left:1525px;top:1058.1px;" width="25" height="24" viewBox="0 0 25 24"><path d="M18.5,7.5 A9,9 0 1 0 19.8,14.5" fill="none" stroke="#1268c9" stroke-width="3.2" stroke-linecap="round"/><path d="M19.5,2 V8.5 H13" fill="none" stroke="#1268c9" stroke-width="3.2" stroke-linejoin="round" stroke-linecap="round"/></svg>
<div class="b" style="left:371px;top:1103.75px;width:1209.00px;height:1.50px;background:#e3e4e8;"></div>
<div class="b" style="left:1357.5px;top:475.2px;width:1.00px;height:620.80px;background:#f0f0f3;"></div>
<div class="b" style="left:436px;top:404.5px;width:702.00px;height:632.00px;border:6.5px solid #b67cf9;border-radius:19px;"></div>
<div class="b" style="left:0;top:1028px;width:1600px;height:68px;background:linear-gradient(to bottom, rgba(255,255,255,0) 0%, rgba(255,255,255,0.6) 45%, rgba(255,255,255,1) 80%);"></div>
</body></html>
